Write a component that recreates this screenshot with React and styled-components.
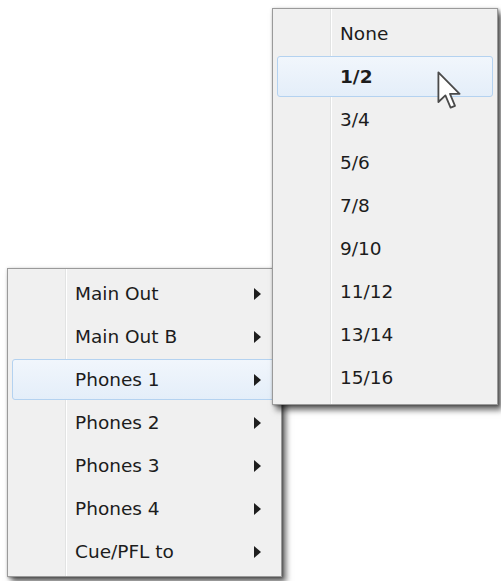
import React from "react";
import styled, { createGlobalStyle } from "styled-components";

const GlobalStyle = createGlobalStyle`
  html, body {
    margin: 0;
    padding: 0;
    background: #ffffff;
    overflow: hidden;
  }
  body {
    font-family: "DejaVu Sans", Tahoma, Verdana, sans-serif;
  }
`;

const Stage = styled.div`
  position: relative;
  width: 501px;
  height: 581px;
  box-sizing: border-box;
  padding: 268px 0 0 7px;
`;

const Menu = styled.div`
  position: ${(p) => (p.$floating ? "absolute" : "relative")};
  top: ${(p) => (p.$floating ? "8px" : "auto")};
  left: ${(p) => (p.$floating ? "272px" : "auto")};
  z-index: ${(p) => (p.$floating ? 2 : 1)};
  display: flex;
  flex-direction: column;
  width: ${(p) => p.$width}px;
  height: ${(p) => p.$height}px;
  box-sizing: border-box;
  padding: 3px 0;
  background: #f0f0f0;
  border: 1px solid #9a9a9a;
  box-shadow: 4px 5px 6px rgba(0, 0, 0, 0.6), 1px 1px 2px rgba(0, 0, 0, 0.25),
    0 0 3px rgba(0, 0, 0, 0.12);

  &::before {
    content: "";
    position: absolute;
    top: 0;
    bottom: 0;
    left: 57px;
    width: 1px;
    background: #e2e3e3;
    box-shadow: 1px 0 0 #ffffff;
  }
`;

const Row = styled.div`
  position: relative;
  z-index: 1;
  display: flex;
  align-items: center;
  flex: none;
  height: 41px;
  margin: 1px 4px;
  padding: 0 15px 0 62px;
  box-sizing: border-box;
  border: 1px solid ${(p) => (p.$active ? "#b4d2f0" : "transparent")};
  border-radius: 3px;
  background: ${(p) =>
    p.$active ? "linear-gradient(#f1f6fc, #e4eef9)" : "transparent"};
  color: #1c1c1c;
  font-size: 18.5px;
  font-weight: ${(p) => (p.$bold ? 700 : 400)};
`;

const Label = styled.span`
  flex: 1;
  white-space: nowrap;
`;

const Arrow = styled.span`
  width: 0;
  height: 0;
  border-left: 7px solid #1e1e1e;
  border-top: 6px solid transparent;
  border-bottom: 6px solid transparent;
`;

const Pointer = styled.svg`
  position: absolute;
  left: 159px;
  top: 14px;
`;

const outputs = [
  "Main Out",
  "Main Out B",
  "Phones 1",
  "Phones 2",
  "Phones 3",
  "Phones 4",
  "Cue/PFL to",
];

const ratios = ["None", "1/2", "3/4", "5/6", "7/8", "9/10", "11/12", "13/14", "15/16"];

const Cursor = () => (
  <Pointer width="28" height="40" viewBox="0 0 14 20">
    <path
      d="M0.7 0.7 L0.7 15.5 L4.2 12.2 L6.8 18.3 L9 17.4 L6.5 11.4 L11.3 11.4 Z"
      fill="#ffffff"
      stroke="#4a4a4a"
      strokeWidth="0.9"
      strokeLinejoin="round"
    />
  </Pointer>
);

export default function App() {
  return (
    <>
      <GlobalStyle />
      <Stage>
        <Menu $width={275} $height={309}>
          {outputs.map((name) => (
            <Row key={name} $active={name === "Phones 1"}>
              <Label>{name}</Label>
              <Arrow />
            </Row>
          ))}
        </Menu>
        <Menu $floating $width={226} $height={397}>
          {ratios.map((r) => (
            <Row key={r} $active={r === "1/2"} $bold={r === "1/2"}>
              <Label>{r}</Label>
              {r === "1/2" && <Cursor />}
            </Row>
          ))}
        </Menu>
      </Stage>
    </>
  );
}
